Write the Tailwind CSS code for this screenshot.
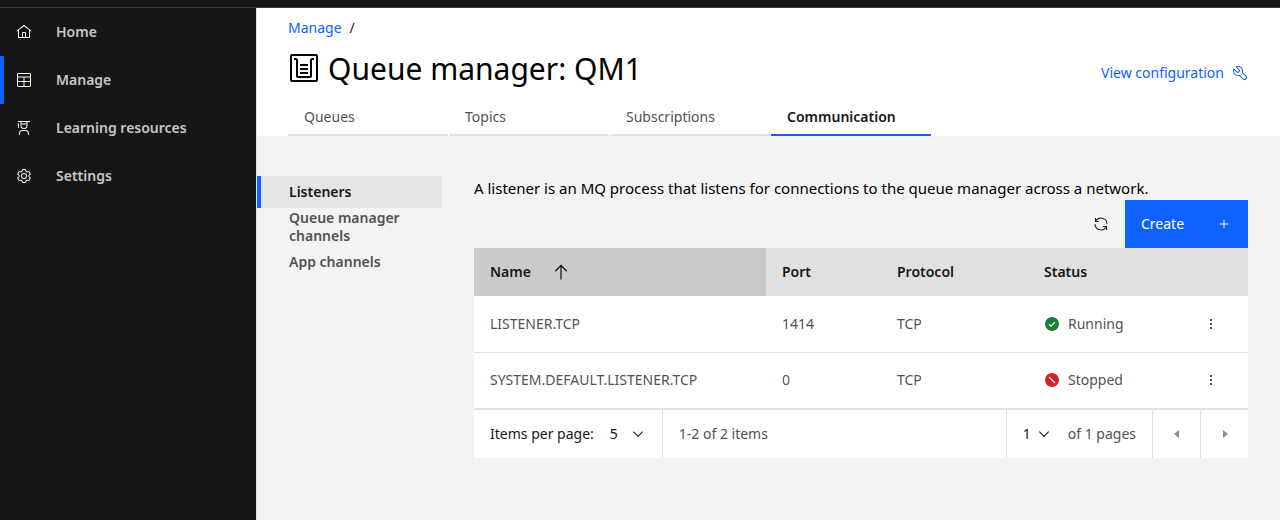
<!DOCTYPE html>
<html lang="en">
<head>
    <meta charset="UTF-8">
    <meta name="viewport" content="width=device-width, initial-scale=1.0">
    <title>Queue manager: QM1</title>
    <script src="https://cdn.jsdelivr.net/npm/@tailwindcss/browser@4"></script>
</head>
<body class="min-h-screen flex flex-col bg-[#f3f3f3] text-[#161616] text-sm font-['Noto_Sans',sans-serif]">

    <!-- Top bar -->
    <header class="h-2 bg-[#161616] border-b border-[#393939]"></header>

    <div class="flex flex-1">

        <!-- Main navigation -->
        <nav class="w-64 shrink-0 bg-[#161616] text-[#c6c6c6] font-semibold">
            <a href="#" class="flex items-center gap-6 h-12 pl-3 pr-4 border-l-4 border-transparent">
                <svg class="size-4 fill-[#f4f4f4]" viewBox="0 0 32 32"><path d="M16.6123,2.2138a1.01,1.01,0,0,0-1.2427,0L1,13.4194l1.2427,1.5717L4,13.6209V26a2.0041,2.0041,0,0,0,2,2H26a2.0037,2.0037,0,0,0,2-2V13.63L29.7573,15,31,13.4282ZM18,26H14V18h4Zm2,0V18a2.0023,2.0023,0,0,0-2-2H14a2.002,2.002,0,0,0-2,2v8H6V12.0615l10-7.79,10,7.8005V26Z"/></svg>
                Home
            </a>
            <a href="#" class="flex items-center gap-6 h-12 pl-3 pr-4 border-l-4 border-[#0f62fe]">
                <svg class="size-4 fill-none stroke-[#f4f4f4] stroke-2" viewBox="0 0 32 32"><rect x="3" y="3" width="26" height="26" rx="1"/><path d="M3 10H29M3 19H29M16 10V29"/></svg>
                Manage
            </a>
            <a href="#" class="flex items-center gap-6 h-12 pl-3 pr-4 border-l-4 border-transparent">
                <svg class="size-4 fill-[#f4f4f4]" viewBox="0 0 32 32"><path d="M26,30H24V27a5.0059,5.0059,0,0,0-5-5H13a5.0059,5.0059,0,0,0-5,5v3H6V27a7.0082,7.0082,0,0,1,7-7h6a7.0082,7.0082,0,0,1,7,7Z"/><path d="M5,6A1,1,0,0,0,4,7v9H6V7A1,1,0,0,0,5,6Z"/><path d="M4,2V4H9v7a7,7,0,0,0,14,0V4h5V2Zm7,2H21V7H11Zm5,12a5,5,0,0,1-5-5V9H21v2A5,5,0,0,1,16,16Z"/></svg>
                Learning resources
            </a>
            <a href="#" class="flex items-center gap-6 h-12 pl-3 pr-4 border-l-4 border-transparent">
                <svg class="size-4 fill-[#f4f4f4]" viewBox="0 0 32 32"><path d="M27,16.76c0-.25,0-.5,0-.76s0-.51,0-.77l1.92-1.68A2,2,0,0,0,29.3,11L26.94,7a2,2,0,0,0-1.73-1,2,2,0,0,0-.64.1l-2.43.82a11.35,11.35,0,0,0-1.31-.75l-.51-2.52a2,2,0,0,0-2-1.61H13.64a2,2,0,0,0-2,1.61l-.51,2.52a11.48,11.48,0,0,0-1.32.75L7.43,6.06A2,2,0,0,0,6.79,6,2,2,0,0,0,5.06,7L2.7,11a2,2,0,0,0,.41,2.51L5,15.24c0,.25,0,.5,0,.76s0,.51,0,.77L3.11,18.45A2,2,0,0,0,2.7,21L5.06,25a2,2,0,0,0,1.73,1,2,2,0,0,0,.64-.1l2.43-.82a11.35,11.35,0,0,0,1.31.75l.51,2.52a2,2,0,0,0,2,1.61h4.72a2,2,0,0,0,2-1.61l.51-2.52a11.48,11.48,0,0,0,1.32-.75l2.42.82a2,2,0,0,0,.64.1,2,2,0,0,0,1.73-1L29.3,21a2,2,0,0,0-.41-2.51ZM25.21,24l-3.43-1.16a8.86,8.86,0,0,1-2.71,1.57L18.36,28H13.64l-.71-3.55a9.36,9.36,0,0,1-2.7-1.57L6.79,24,4.43,20l2.72-2.4a8.9,8.9,0,0,1,0-3.13L4.43,12,6.79,8l3.43,1.16a8.86,8.86,0,0,1,2.71-1.57L13.64,4h4.72l.71,3.55a9.36,9.36,0,0,1,2.7,1.57L25.21,8,27.57,12l-2.72,2.4a8.9,8.9,0,0,1,0,3.13L27.57,20Z"/><path d="M16,22a6,6,0,1,1,6-6A5.94,5.94,0,0,1,16,22Zm0-10a3.91,3.91,0,0,0-4,4,3.91,3.91,0,0,0,4,4,3.91,3.91,0,0,0,4-4A3.91,3.91,0,0,0,16,12Z"/></svg>
                Settings
            </a>
        </nav>

        <main class="flex-1 min-w-0 border-l border-[#e0e0e0]">

            <!-- Page header -->
            <div class="bg-white pl-[31px] pr-8 pt-2.5">
                <div class="flex gap-2 leading-5">
                    <a href="#" class="text-[#0f62fe]">Manage</a>
                    <span>/</span>
                </div>
                <div class="flex items-center justify-between h-[62px]">
                    <h1 class="flex items-center gap-2 text-3xl leading-10 text-black">
                        <svg class="size-8 fill-none stroke-black stroke-2" viewBox="0 0 32 32"><rect x="3" y="2" width="26" height="26" rx="1"/><path d="M6 6H7.500Q9 6 9 7.500V22.500Q9 24 10.500 24H21.500Q23 24 23 22.500V7.500Q23 6 24.500 6H26M12 12H20M12 16H20M12 20H20"/></svg>
                        Queue manager: QM1
                    </h1>
                    <a href="#" class="flex items-center gap-2 pt-2 text-[#0f62fe]">
                        View configuration
                        <svg class="size-4 fill-current" viewBox="0 0 32 32"><path d="M12.1,2A9.8,9.8,0,0,0,6.7,3.6L13.1,10a2.1,2.1,0,0,1,.2,3,2.1,2.1,0,0,1-3-.2L3.7,6.4A9.84,9.84,0,0,0,2,12.1,10.14,10.14,0,0,0,12.1,22.2a10.9,10.9,0,0,0,2.6-.3l6.7,6.7a5,5,0,0,0,7.1-7.1l-6.7-6.7a10.9,10.9,0,0,0,.3-2.6A10,10,0,0,0,12.1,2Zm8,10.1a7.61,7.61,0,0,1-.3,2.1l-.3,1.1.8.8,6.7,6.7a2.88,2.88,0,0,1,.9,2.1A2.72,2.72,0,0,1,27,27a2.9,2.9,0,0,1-4.2,0l-6.7-6.7-.8-.8-1.1.3a7.61,7.61,0,0,1-2.1.3,8.27,8.27,0,0,1-5.7-2.3A7.63,7.63,0,0,1,4,12.1a8.33,8.33,0,0,1,.3-2.2l4.4,4.4a4.14,4.14,0,0,0,5.9.2,4.14,4.14,0,0,0-.2-5.9L10,4.2a6.45,6.45,0,0,1,2-.3,8.27,8.27,0,0,1,5.7,2.3A8.49,8.49,0,0,1,20.1,12.1Z"/></svg>
                    </a>
                </div>
                <div role="tablist" class="flex gap-px text-[#525252]">
                    <button role="tab" class="w-40 h-9 px-4 text-left border-b-2 border-[#e0e0e0]">Queues</button>
                    <button role="tab" class="w-40 h-9 px-4 text-left border-b-2 border-[#e0e0e0]">Topics</button>
                    <button role="tab" class="w-40 h-9 px-4 text-left border-b-2 border-[#e0e0e0]">Subscriptions</button>
                    <button role="tab" aria-selected="true" class="w-40 h-9 px-4 text-left border-b-2 border-[#0f62fe] font-semibold text-[#161616]">Communication</button>
                </div>
            </div>

            <div class="flex gap-8 pt-10 pr-8">

                <!-- Communication sections -->
                <nav class="w-[185px] shrink-0 font-semibold leading-[18px] text-[#525252]">
                    <a href="#" class="flex items-center min-h-8 py-px pl-7 pr-4 border-l-4 border-[#0f62fe] bg-[#e5e5e5] text-[#161616]">Listeners</a>
                    <a href="#" class="flex items-center min-h-8 py-px pl-7 pr-4 border-l-4 border-transparent">Queue manager channels</a>
                    <a href="#" class="flex items-center min-h-8 py-px pl-7 pr-4 border-l-4 border-transparent">App channels</a>
                </nav>

                <section class="flex-1 min-w-0">
                    <p class="h-6 text-[15px] leading-6 text-black whitespace-nowrap">A listener is an MQ process that listens for connections to the queue manager across a network.</p>

                    <div class="flex justify-end h-12">
                        <button aria-label="Refresh" class="w-12 flex items-center justify-center">
                            <svg class="size-4 fill-[#161616]" viewBox="0 0 32 32"><path d="M12,10H6.78A11,11,0,0,1,27,16h2A13,13,0,0,0,6,7.68V4H4v8h8Z"/><path d="M20,22h5.22A11,11,0,0,1,5,16H3a13,13,0,0,0,23,8.32V28h2V20H20Z"/></svg>
                        </button>
                        <button class="w-[123px] px-4 flex items-center justify-between bg-[#0f62fe] text-white">
                            Create
                            <svg class="size-4 fill-white" viewBox="0 0 32 32"><path d="M17 15V8H15V15H8V17H15V24H17V17H24V15Z"/></svg>
                        </button>
                    </div>

                    <!-- Listeners table -->
                    <table class="w-full table-fixed text-left bg-white">
                        <thead class="bg-[#e0e0e0]">
                            <tr class="h-12">
                                <th class="px-4 font-semibold bg-[#cacaca]">
                                    <button class="flex items-center gap-5">
                                        Name
                                        <svg class="size-5 fill-[#161616]" viewBox="0 0 32 32"><path d="M16 4 6 14 7.410 15.410 15 7.830 15 28 17 28 17 7.830 24.590 15.410 26 14Z"/></svg>
                                    </button>
                                </th>
                                <th class="w-[115px] px-4 font-semibold">Port</th>
                                <th class="w-[147px] px-4 font-semibold">Protocol</th>
                                <th class="w-[147px] px-4 font-semibold">Status</th>
                                <th class="w-[73px]"></th>
                            </tr>
                        </thead>
                        <tbody class="text-[#525252]">
                            <tr class="h-14 border-b border-[#e0e0e0]">
                                <td class="px-4">LISTENER.TCP</td>
                                <td class="px-4">1414</td>
                                <td class="px-4">TCP</td>
                                <td class="px-4">
                                    <span class="flex items-center gap-2">
                                        <svg class="size-4" viewBox="0 0 16 16"><circle cx="8" cy="8" r="7" fill="#198038"/><path d="M5 8.200 7.100 10.200 11 6.200" fill="none" stroke="#fff" stroke-width="1.200"/></svg>
                                        Running
                                    </span>
                                </td>
                                <td>
                                    <button aria-label="Options for LISTENER.TCP" class="size-8 ml-5 flex items-center justify-center">
                                        <svg class="size-4 fill-[#161616]" viewBox="0 0 32 32"><circle cx="16" cy="8" r="2"/><circle cx="16" cy="16" r="2"/><circle cx="16" cy="24" r="2"/></svg>
                                    </button>
                                </td>
                            </tr>
                            <tr class="h-14">
                                <td class="px-4">SYSTEM.DEFAULT.LISTENER.TCP</td>
                                <td class="px-4">0</td>
                                <td class="px-4">TCP</td>
                                <td class="px-4">
                                    <span class="flex items-center gap-2">
                                        <svg class="size-4" viewBox="0 0 16 16"><circle cx="8" cy="8" r="7" fill="#da1e28"/><path d="M5 5 11 11" fill="none" stroke="#fff" stroke-width="1.200"/></svg>
                                        Stopped
                                    </span>
                                </td>
                                <td>
                                    <button aria-label="Options for SYSTEM.DEFAULT.LISTENER.TCP" class="size-8 ml-5 flex items-center justify-center">
                                        <svg class="size-4 fill-[#161616]" viewBox="0 0 32 32"><circle cx="16" cy="8" r="2"/><circle cx="16" cy="16" r="2"/><circle cx="16" cy="24" r="2"/></svg>
                                    </button>
                                </td>
                            </tr>
                        </tbody>
                    </table>

                    <!-- Pagination -->
                    <div class="flex h-[50px] bg-white border-t-2 border-[#e0e0e0] text-[#525252]">
                        <div class="flex items-center pl-4 border-r border-[#e0e0e0] text-[#161616]">
                            <label for="page-size">Items per page:</label>
                            <div class="relative flex items-center">
                                <select id="page-size" class="w-[68px] h-12 pl-4 appearance-none">
                                    <option>5</option>
                                    <option>10</option>
                                    <option>20</option>
                                </select>
                                <svg class="absolute right-4 size-4 fill-[#161616] pointer-events-none" viewBox="0 0 16 16"><path d="M8 11 3 6 3.700 5.300 8 9.600 12.300 5.300 13 6Z"/></svg>
                            </div>
                        </div>
                        <span class="flex-1 flex items-center pl-4">1-2 of 2 items</span>
                        <div class="flex items-center border-l border-[#e0e0e0]">
                            <div class="relative flex items-center text-[#161616]">
                                <select id="page-number" aria-label="Page number" class="w-[61px] h-12 pl-4 appearance-none">
                                    <option>1</option>
                                </select>
                                <svg class="absolute right-4 size-4 fill-[#161616] pointer-events-none" viewBox="0 0 16 16"><path d="M8 11 3 6 3.700 5.300 8 9.600 12.300 5.300 13 6Z"/></svg>
                            </div>
                            <label for="page-number" class="pr-4">of 1 pages</label>
                        </div>
                        <button aria-label="Previous page" class="w-12 flex items-center justify-center border-l border-[#e0e0e0]">
                            <svg class="size-4 fill-[#8d8d8d]" viewBox="0 0 32 32"><path d="M20 24 10 16 20 8Z"/></svg>
                        </button>
                        <button aria-label="Next page" class="w-12 flex items-center justify-center border-l border-[#e0e0e0]">
                            <svg class="size-4 fill-[#8d8d8d]" viewBox="0 0 32 32"><path d="M12 8 22 16 12 24Z"/></svg>
                        </button>
                    </div>
                </section>
            </div>
        </main>
    </div>
</body>
</html>
